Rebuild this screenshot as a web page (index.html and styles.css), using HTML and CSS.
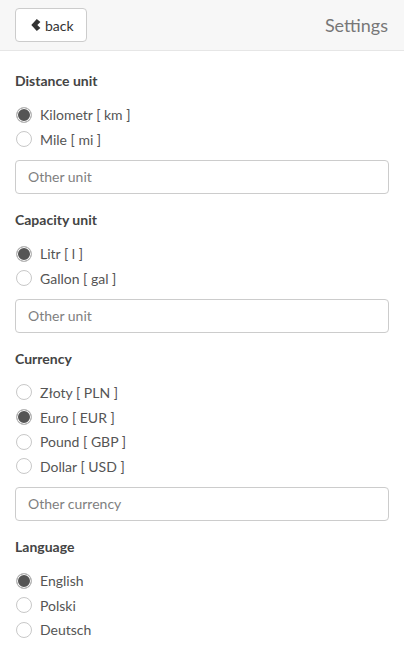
FILE: index.html
```html
<!DOCTYPE html>
<html>
<head>
<meta charset="utf-8">
<link rel="stylesheet" href="styles.css">
</head>
<body>
<header class="topbar">
  <button class="back-btn" type="button">
    <svg class="chev" width="10" height="12" viewBox="0 0 10 12"><path d="M5.8 0 L9.4 3.1 L6.3 6 L9.4 8.9 L5.8 12 L0.3 6 Z" fill="#333"/></svg>
    <span>back</span>
  </button>
  <div class="title">Settings</div>
</header>
<main class="content">
  <section class="group">
    <h3 class="group-title">Distance unit</h3>
    <div class="options">
      <label class="opt"><input type="radio" name="dist" checked><span>Kilometr [ km ]</span></label>
      <label class="opt"><input type="radio" name="dist"><span>Mile [ mi ]</span></label>
    </div>
    <input class="field" type="text" placeholder="Other unit">
  </section>
  <section class="group">
    <h3 class="group-title">Capacity unit</h3>
    <div class="options">
      <label class="opt"><input type="radio" name="cap" checked><span>Litr [ l ]</span></label>
      <label class="opt"><input type="radio" name="cap"><span>Gallon [ gal ]</span></label>
    </div>
    <input class="field" type="text" placeholder="Other unit">
  </section>
  <section class="group">
    <h3 class="group-title">Currency</h3>
    <div class="options">
      <label class="opt"><input type="radio" name="cur"><span>Złoty [ PLN ]</span></label>
      <label class="opt"><input type="radio" name="cur" checked><span>Euro [ EUR ]</span></label>
      <label class="opt"><input type="radio" name="cur"><span>Pound [ GBP ]</span></label>
      <label class="opt"><input type="radio" name="cur"><span>Dollar [ USD ]</span></label>
    </div>
    <input class="field" type="text" placeholder="Other currency">
  </section>
  <section class="group">
    <h3 class="group-title">Language</h3>
    <div class="options">
      <label class="opt"><input type="radio" name="lang" checked><span>English</span></label>
      <label class="opt"><input type="radio" name="lang"><span>Polski</span></label>
      <label class="opt"><input type="radio" name="lang"><span>Deutsch</span></label>
    </div>
  </section>
</main>
</body>
</html>
```
FILE: styles.css
```css
* { box-sizing: border-box; }
html, body { margin: 0; padding: 0; background: #fff; }
body {
  font-family: Lato, "Open Sans", sans-serif;
  font-size: 14px;
  color: #555;
  width: 404px;
  overflow: hidden;
}
.topbar {
  height: 51px;
  background: #f7f7f7;
  border-bottom: 1px solid #e6e6e6;
  display: flex;
  align-items: flex-start;
  justify-content: space-between;
  padding: 8px 16px 0 15px;
}
.back-btn {
  display: inline-flex;
  align-items: center;
  gap: 4px;
  width: 72px;
  height: 34px;
  padding: 0 0 0 15px;
  background: #fff;
  border: 1px solid #ccc;
  border-radius: 4px;
  font-family: Lato, sans-serif;
  font-size: 14px;
  color: #333;
}
.chev { display: block; }
.title {
  font-size: 18px;
  color: #777;
  line-height: 34px;
}
.content { padding: 0 15px; }
.group { padding-top: 20px; }
.group + .group { padding-top: 16px; }
.group-title {
  margin: 0;
  font-size: 14px;
  font-weight: 700;
  line-height: 20px;
  color: #444;
}
.options { margin-top: 12px; display: flex; flex-direction: column; }
.opt {
  display: flex;
  align-items: center;
  height: 24.67px;
  line-height: 24px;
}
.opt input {
  appearance: none;
  -webkit-appearance: none;
  margin: -1px 8px 0 1px;
  width: 16px;
  height: 16px;
  border-radius: 50%;
  border: 1px solid #c8c8c8;
  background: #fff;
  flex: none;
}
.opt input:checked {
  background: #555;
  border-color: #bbb;
  box-shadow: inset 0 0 0 1px #fff;
}
.field {
  display: block;
  margin-top: 7.5px;
  width: 100%;
  height: 34px;
  border: 1px solid #ccc;
  border-radius: 4px;
  padding: 0 12px;
  font-family: Lato, sans-serif;
  font-size: 14px;
  color: #555;
  background: #fff;
}
.field::placeholder { color: #7f7f7f; }
```
